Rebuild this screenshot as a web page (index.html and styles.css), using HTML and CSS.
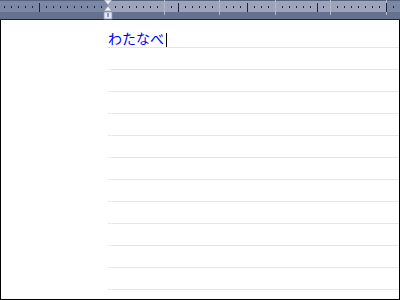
FILE: index.html
```html
<!DOCTYPE html>
<html lang="ja">
<head>
<meta charset="utf-8">
<link rel="stylesheet" href="styles.css">
</head>
<body>
<div class="ruler">
<svg width="400" height="20" viewBox="0 0 400 20" shape-rendering="crispEdges">
  <rect x="0" y="0" width="400" height="20" fill="#66718f"/>
  <rect x="0" y="0" width="400" height="1" fill="#56617f"/>
  <rect x="0" y="1" width="108" height="11" fill="#7c87a3"/>
  <rect x="108" y="1" width="278" height="11" fill="#9ca4bc"/>
  <rect x="386" y="1" width="14" height="11" fill="#7c87a3"/>
  <rect x="0" y="19" width="400" height="1" fill="#1e2540"/>
  <g fill="#b3b9ca">
    <rect x="164" y="0" width="1" height="15"/>
    <rect x="219" y="0" width="1" height="15"/>
    <rect x="275" y="0" width="1" height="15"/>
    <rect x="330" y="0" width="1" height="15"/>
    <rect x="386" y="0" width="1" height="15"/>
  </g>
  <g fill="#1b2340">
    <rect x="39" y="3" width="1" height="9"/>
    <rect x="178" y="3" width="1" height="9"/>
    <rect x="247" y="3" width="1" height="9"/>
    <rect x="317" y="3" width="1" height="9"/>
    <rect x="386" y="3" width="1" height="9"/>
  </g>
  <g fill="#1b2340">
    <rect x="4" y="6" width="1" height="2"/>
    <rect x="11" y="6" width="1" height="2"/>
    <rect x="18" y="6" width="1" height="2"/>
    <rect x="25" y="6" width="1" height="2"/>
    <rect x="32" y="6" width="1" height="2"/>
    <rect x="46" y="6" width="1" height="2"/>
    <rect x="53" y="6" width="1" height="2"/>
    <rect x="60" y="6" width="1" height="2"/>
    <rect x="67" y="6" width="1" height="2"/>
    <rect x="74" y="6" width="1" height="2"/>
    <rect x="81" y="6" width="1" height="2"/>
    <rect x="87" y="6" width="1" height="2"/>
    <rect x="94" y="6" width="1" height="2"/>
    <rect x="101" y="6" width="1" height="2"/>
    <rect x="115" y="6" width="1" height="2"/>
    <rect x="122" y="6" width="1" height="2"/>
    <rect x="129" y="6" width="1" height="2"/>
    <rect x="136" y="6" width="1" height="2"/>
    <rect x="143" y="6" width="1" height="2"/>
    <rect x="150" y="6" width="1" height="2"/>
    <rect x="157" y="6" width="1" height="2"/>
    <rect x="171" y="6" width="1" height="2"/>
    <rect x="185" y="6" width="1" height="2"/>
    <rect x="192" y="6" width="1" height="2"/>
    <rect x="199" y="6" width="1" height="2"/>
    <rect x="205" y="6" width="1" height="2"/>
    <rect x="212" y="6" width="1" height="2"/>
    <rect x="226" y="6" width="1" height="2"/>
    <rect x="233" y="6" width="1" height="2"/>
    <rect x="240" y="6" width="1" height="2"/>
    <rect x="254" y="6" width="1" height="2"/>
    <rect x="261" y="6" width="1" height="2"/>
    <rect x="268" y="6" width="1" height="2"/>
    <rect x="282" y="6" width="1" height="2"/>
    <rect x="289" y="6" width="1" height="2"/>
    <rect x="296" y="6" width="1" height="2"/>
    <rect x="303" y="6" width="1" height="2"/>
    <rect x="310" y="6" width="1" height="2"/>
    <rect x="323" y="6" width="1" height="2"/>
    <rect x="337" y="6" width="1" height="2"/>
    <rect x="344" y="6" width="1" height="2"/>
    <rect x="351" y="6" width="1" height="2"/>
    <rect x="358" y="6" width="1" height="2"/>
    <rect x="365" y="6" width="1" height="2"/>
    <rect x="372" y="6" width="1" height="2"/>
    <rect x="379" y="6" width="1" height="2"/>
    <rect x="393" y="6" width="1" height="2"/>
  </g>
  <g shape-rendering="auto">
    <path d="M104 0 H112 L108 5 Z" fill="#eef0f6" stroke="#8a93ad" stroke-width="0.8"/>
    <path d="M108 6 L112 11 H104 Z" fill="#eef0f6" stroke="#8a93ad" stroke-width="0.8"/>
    <rect x="104" y="12" width="8" height="7" fill="#e6e9f2" stroke="#8a93ad" stroke-width="0.8"/>
    <rect x="107.5" y="13" width="1" height="4" fill="#2a3ad8"/>
  </g>
</svg>
</div>
<div class="page">
  <div class="row first"><span class="text">わたなべ</span><span class="caret"></span></div>
  <div class="row"></div>
  <div class="row"></div>
  <div class="row"></div>
  <div class="row"></div>
  <div class="row"></div>
  <div class="row"></div>
  <div class="row"></div>
  <div class="row"></div>
  <div class="row"></div>
  <div class="row"></div>
  <div class="row"></div>
</div>
</body>
</html>
```

FILE: styles.css
```css
html, body {
  margin: 0;
  padding: 0;
  background: #ffffff;
}
body {
  width: 400px;
  height: 300px;
  overflow: hidden;
  font-family: "Noto Sans CJK JP", "Noto Sans", sans-serif;
}
.ruler {
  height: 20px;
}
.ruler svg {
  display: block;
}
.page {
  box-sizing: border-box;
  height: 280px;
  border-left: 1px solid #000;
  border-right: 1px solid #000;
  border-bottom: 1px solid #000;
  padding-top: 6px;
  padding-left: 107px;
  display: flex;
  flex-direction: column;
}
.row {
  box-sizing: border-box;
  height: 22px;
  flex: none;
  display: flex;
  align-items: flex-end;
  background: linear-gradient(to right, #e4e4e4 0 2px, transparent 2px 3px, #e6e6e6 3px) bottom / 100% 1px no-repeat;
}
.text {
  color: #0000ff;
  font-size: 14px;
  line-height: 16px;
  margin-bottom: 2px;
}
.caret {
  width: 1px;
  height: 14px;
  background: #000;
  margin-left: 2px;
  margin-bottom: 1px;
}
```
